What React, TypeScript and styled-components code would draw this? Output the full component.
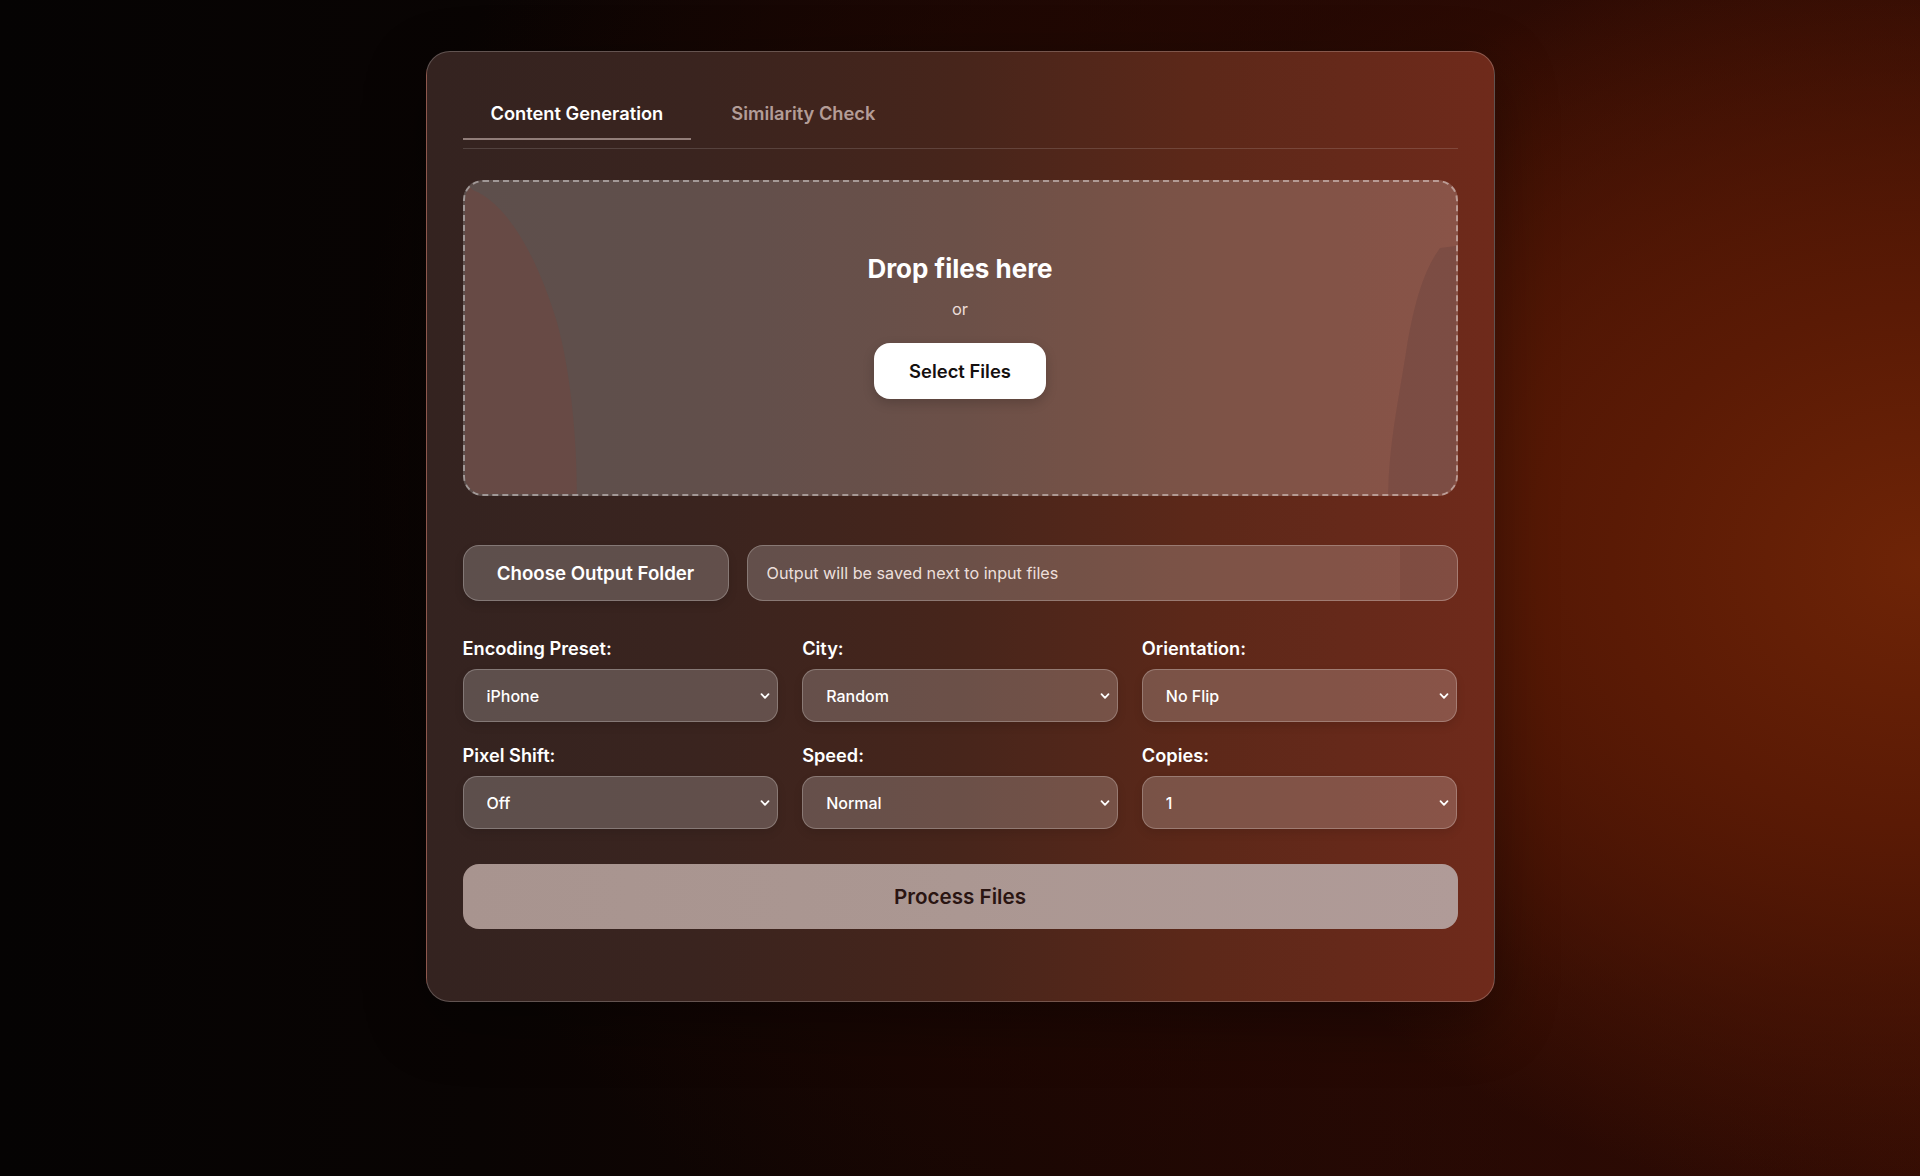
import React, { useState } from "react";
import styled, { createGlobalStyle } from "styled-components";

const GlobalStyle = createGlobalStyle`
  html, body {
    margin: 0;
    padding: 0;
    min-height: 100%;
  }
  body {
    font-family: Inter, "Noto Sans", "Liberation Sans", sans-serif;
    background:
      radial-gradient(ellipse 40% 55% at 100% 48%, #6e2407 0%, #5a1a05 40%, rgba(60, 14, 3, 0) 100%),
      radial-gradient(ellipse 70% 90% at 88% 40%, rgba(72, 18, 4, 0.95) 0%, rgba(42, 10, 3, 0.6) 50%, rgba(0, 0, 0, 0) 100%),
      linear-gradient(90deg, #050303 0%, #090403 25%, #180603 55%, #280904 80%, #360d04 100%);
    background-attachment: fixed;
    min-height: 1176px;
  }
  * { box-sizing: border-box; }
`;

const Page = styled.div`
  display: flex;
  justify-content: center;
  padding-top: 51px;
  min-height: 1176px;
`;

const Card = styled.div`
  width: 1069px;
  border: 1px solid rgba(255, 255, 255, 0.22);
  border-radius: 24px;
  padding: 34px 36px 72px 36px;
  align-self: flex-start;
  background: linear-gradient(90deg, #342320 0%, #3a241f 25%, #47251b 50%, #5c2819 72%, #6f2a1b 100%);
  box-shadow: 0 20px 60px rgba(0, 0, 0, 0.35);
  display: flex;
  flex-direction: column;
`;

const TabBar = styled.div`
  display: flex;
  gap: 12px;
  padding-bottom: 8px;
  border-bottom: 1px solid rgba(255, 255, 255, 0.14);
  margin-bottom: 31px;
`;

const Tab = styled.button<{ $active?: boolean }>`
  background: none;
  border: none;
  border-bottom: 2px solid ${(p) => (p.$active ? "rgba(220, 200, 195, 0.55)" : "transparent")};
  padding: 16px 28px 14px;
  font-family: inherit;
  font-size: 18.3px;
  line-height: 22px;
  font-weight: 600;
  color: ${(p) => (p.$active ? "#ffffff" : "rgba(225, 205, 200, 0.72)")};
  cursor: pointer;
`;

const DropZone = styled.div`
  position: relative;
  height: 316px;
  border: 2px dashed rgba(255, 255, 255, 0.42);
  border-radius: 20px;
  background: rgba(255, 255, 255, 0.2);
  overflow: hidden;
  display: flex;
  flex-direction: column;
  align-items: center;
  padding-top: 71px;
`;

const Blobs = styled.svg`
  position: absolute;
  inset: 0;
  width: 100%;
  height: 100%;
  pointer-events: none;
`;

const DropTitle = styled.div`
  position: relative;
  font-size: 26px;
  line-height: 32px;
  font-weight: 700;
  color: #ffffff;
`;

const DropOr = styled.div`
  position: relative;
  margin-top: 14px;
  font-size: 16.5px;
  line-height: 20px;
  color: rgba(255, 240, 236, 0.88);
`;

const SelectFilesButton = styled.button`
  position: relative;
  margin-top: 24px;
  height: 56px;
  padding: 0 35px;
  border: none;
  border-radius: 16px;
  background: #ffffff;
  color: #15100f;
  font-family: inherit;
  font-size: 18.4px;
  font-weight: 600;
  box-shadow: 0 4px 12px rgba(0, 0, 0, 0.18);
  cursor: pointer;
`;

const OutputRow = styled.div`
  display: flex;
  gap: 18px;
  margin-top: 49px;
  height: 56px;
`;

const GlassButton = styled.button`
  flex: 0 0 266px;
  height: 56px;
  border: 1px solid rgba(255, 255, 255, 0.24);
  border-radius: 16px;
  background: rgba(255, 255, 255, 0.2);
  color: #ffffff;
  font-family: inherit;
  font-size: 18.7px;
  font-weight: 600;
  cursor: pointer;
  box-shadow: 0 4px 10px rgba(0, 0, 0, 0.12);
`;

const OutputField = styled.div`
  position: relative;
  flex: 1;
  height: 56px;
  border: 1px solid rgba(255, 255, 255, 0.24);
  border-radius: 16px;
  background: rgba(255, 255, 255, 0.2);
  display: flex;
  align-items: center;
  padding-left: 19px;
  overflow: hidden;
  font-size: 16.2px;
  color: rgba(255, 242, 238, 0.9);

  &::after {
    content: "";
    position: absolute;
    top: 0;
    right: 0;
    bottom: 0;
    width: 57px;
    background: rgba(60, 20, 15, 0.1);
  }
`;

const OptionsGrid = styled.div`
  display: grid;
  grid-template-columns: repeat(3, 1fr);
  column-gap: 24px;
  row-gap: 22px;
  margin-top: 36px;
`;

const Field = styled.label`
  display: flex;
  flex-direction: column;
  gap: 10px;
`;

const FieldLabel = styled.span`
  font-size: 18.2px;
  line-height: 22px;
  font-weight: 600;
  color: #ffffff;
`;

const SelectWrap = styled.div`
  position: relative;
  height: 53px;
`;

const Select = styled.select`
  appearance: none;
  -webkit-appearance: none;
  width: 100%;
  height: 100%;
  border: 1px solid rgba(255, 255, 255, 0.24);
  border-radius: 14px;
  background: rgba(255, 255, 255, 0.2);
  color: #ffffff;
  font-family: inherit;
  font-size: 16px;
  font-weight: 500;
  padding: 0 36px 0 23px;
  box-shadow: 0 4px 10px rgba(0, 0, 0, 0.1);
  outline: none;

  option {
    color: #000;
  }
`;

const Chevron = styled.svg`
  position: absolute;
  right: 8px;
  top: 50%;
  width: 10px;
  height: 10px;
  transform: translateY(-50%);
  pointer-events: none;
`;

const ProcessButton = styled.button`
  margin-top: 35px;
  height: 65px;
  width: 100%;
  border: none;
  border-radius: 16px;
  background: linear-gradient(90deg, #a8948f 0%, #ab9792 50%, #b09b98 100%);
  color: #2a1512;
  font-family: inherit;
  font-size: 20.6px;
  font-weight: 600;
  cursor: pointer;
`;

type Opt = { label: string; value: string; options: string[] };

const fields: Opt[] = [
  { label: "Encoding Preset:", value: "iPhone", options: ["iPhone", "Android", "Web"] },
  { label: "City:", value: "Random", options: ["Random", "New York", "London", "Tokyo"] },
  { label: "Orientation:", value: "No Flip", options: ["No Flip", "Horizontal", "Vertical"] },
  { label: "Pixel Shift:", value: "Off", options: ["Off", "On"] },
  { label: "Speed:", value: "Normal", options: ["Normal", "Slow", "Fast"] },
  { label: "Copies:", value: "1", options: ["1", "2", "3", "4", "5"] },
];

function SelectField({ label, value, options }: Opt) {
  const [v, setV] = useState(value);
  return (
    <Field>
      <FieldLabel>{label}</FieldLabel>
      <SelectWrap>
        <Select value={v} onChange={(e) => setV(e.target.value)}>
          {options.map((o) => (
            <option key={o} value={o}>
              {o}
            </option>
          ))}
        </Select>
        <Chevron viewBox="0 0 10 10">
          <path d="M1.5 3.2 L5 6.8 L8.5 3.2" fill="none" stroke="#ffffff" strokeWidth="1.8" strokeLinecap="round" strokeLinejoin="round" />
        </Chevron>
      </SelectWrap>
    </Field>
  );
}

export default function App() {
  const [tab, setTab] = useState(0);
  return (
    <>
      <GlobalStyle />
      <Page>
        <Card>
          <TabBar>
            <Tab $active={tab === 0} onClick={() => setTab(0)}>
              Content Generation
            </Tab>
            <Tab $active={tab === 1} onClick={() => setTab(1)}>
              Similarity Check
            </Tab>
          </TabBar>

          <DropZone>
            <Blobs viewBox="0 0 992 312" preserveAspectRatio="none">
              <path
                d="M0 0 L0 312 L112 312 C112 258 106 190 92 140 C74 80 44 22 8 8 Z"
                fill="#6e4741"
                opacity="0.6"
              />
              <path
                d="M992 64 L976 66 C960 88 950 120 942 170 C934 220 925 262 924 312 L992 312 Z"
                fill="#70463f"
                opacity="0.5"
              />
            </Blobs>
            <DropTitle>Drop files here</DropTitle>
            <DropOr>or</DropOr>
            <SelectFilesButton>Select Files</SelectFilesButton>
          </DropZone>

          <OutputRow>
            <GlassButton>Choose Output Folder</GlassButton>
            <OutputField>Output will be saved next to input files</OutputField>
          </OutputRow>

          <OptionsGrid>
            {fields.map((f) => (
              <SelectField key={f.label} {...f} />
            ))}
          </OptionsGrid>

          <ProcessButton>Process Files</ProcessButton>
        </Card>
      </Page>
    </>
  );
}
